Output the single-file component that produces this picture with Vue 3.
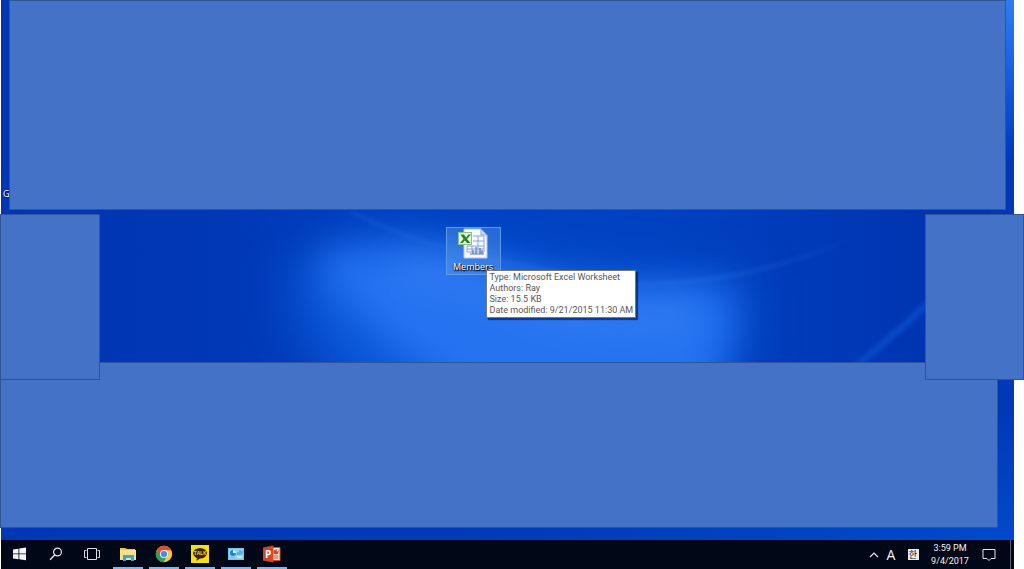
<script setup>
const details = [
  'Type: Microsoft Excel Worksheet',
  'Authors: Ray',
  'Size: 15.5 KB',
  'Date modified: 9/21/2015 11:30 AM',
]
</script>

<template>
  <div class="screen">
    <main class="desktop">
      <svg class="wallpaper" viewBox="0 0 1013 540" preserveAspectRatio="none" aria-hidden="true">
        <defs>
          <linearGradient id="edge" x1="0" y1="0" x2="0" y2="1">
            <stop offset="0" stop-color="#2f7cf0" />
            <stop offset="0.12" stop-color="#1a62e0" />
            <stop offset="0.3" stop-color="#0038b6" />
            <stop offset="0.75" stop-color="#0038b6" />
            <stop offset="1" stop-color="#004acb" />
          </linearGradient>
          <linearGradient id="base" x1="0" y1="0" x2="1" y2="0">
            <stop offset="0" stop-color="#0036b3" />
            <stop offset="0.2" stop-color="#0037b5" />
            <stop offset="0.4" stop-color="#0042c1" />
            <stop offset="0.65" stop-color="#0042c1" />
            <stop offset="0.9" stop-color="#0035b2" />
          </linearGradient>
          <linearGradient id="floor" x1="0" y1="0" x2="1" y2="0">
            <stop offset="0" stop-color="#0037b4" />
            <stop offset="0.5" stop-color="#003bb9" />
            <stop offset="1" stop-color="#004acb" />
          </linearGradient>
          <linearGradient id="arc" gradientUnits="userSpaceOnUse" x1="350" y1="0" x2="860" y2="0">
            <stop offset="0" stop-color="#2470e4" stop-opacity="0.4" />
            <stop offset="0.7" stop-color="#2470e4" stop-opacity="0.6" />
            <stop offset="1" stop-color="#2470e4" stop-opacity="0" />
          </linearGradient>
          <filter id="soft" x="-30%" y="-50%" width="160%" height="200%" color-interpolation-filters="sRGB"><feGaussianBlur stdDeviation="24" /></filter>
          <filter id="mid" x="-30%" y="-80%" width="160%" height="260%" color-interpolation-filters="sRGB"><feGaussianBlur stdDeviation="18" /></filter>
          <filter id="fine" x="-10%" y="-50%" width="120%" height="200%" color-interpolation-filters="sRGB"><feGaussianBlur stdDeviation="2" /></filter>
        </defs>
        <rect width="1013" height="540" fill="url(#base)" />
        <rect y="500" width="1013" height="40" fill="url(#floor)" />
        <rect x="990" width="23" height="540" fill="url(#edge)" />
        <path d="M290 270C330 235 420 230 500 250S690 285 745 275V350L700 420H380Q290 350 290 270Z" fill="#0b58d7" filter="url(#soft)" />
        <path d="M315 262C360 240 430 246 500 272S670 288 725 290Q735 330 705 400H480Q370 350 315 262Z" fill="#2673f0" filter="url(#mid)" />
        <path d="M400 266Q470 272 530 300T690 310" fill="none" stroke="#3b82f5" stroke-width="24" opacity="0.7" filter="url(#mid)" />
        <path d="M350 212Q400 236 450 250T630 284Q740 286 850 239" fill="none" stroke="url(#arc)" stroke-width="3" filter="url(#fine)" />
        <path d="M855 366Q900 330 945 286" fill="none" stroke="#0c5ad6" stroke-width="7" opacity="0.55" filter="url(#fine)" />
      </svg>

      <div class="far-icon">G</div>
      <section class="cover top"></section>
      <section class="cover bottom"></section>
      <section class="cover left"></section>
      <section class="cover right"></section>

      <button class="file" type="button" aria-describedby="file-tip">
        <svg width="32" height="32" viewBox="0 0 32 32" aria-hidden="true">
          <path d="M7 1H24L30 7V30H7Z" fill="#f4f8ff" stroke="#b9c8e4" />
          <path d="M24 1V7H30Z" fill="#cfdcf3" stroke="#8ba8da" />
          <path d="M16 8H27V24H10V18M10 18H27M16 13H27M21 8V24M10 21H27M15 18V24" fill="none" stroke="#8ba6d8" />
          <path d="M16 26V22M19 26V19M23 26V20M25 26V22M13 26H27" fill="none" stroke="#5577bd" stroke-width="1.2" />
          <rect x="1.5" y="4.5" width="13" height="12" fill="#e6f3df" stroke="#8abf7c" />
          <path d="M3.5 6.500H7L9 9.500 11.500 6.500H14L10 11 13.500 15H10L8 12.500 5.500 15H3L6.500 11Z" fill="#258334" />
        </svg>
        <span>Members</span>
      </button>

      <div id="file-tip" class="tip" role="tooltip">
        <div v-for="line in details" :key="line">{{ line }}</div>
      </div>
    </main>

    <footer class="taskbar">
      <nav class="apps" aria-label="Taskbar">
        <button type="button" aria-label="Start">
          <svg width="14" height="14" viewBox="0 0 14 14"><path d="M0 2.500 5.500 1.700V6.500H0ZM6.300 1.600 13 .6V6.500H6.300ZM0 7.300H5.500V12.200L0 11.400ZM6.300 7.300H13V13.200L6.300 12.300Z" fill="#f4f5f8" /></svg>
        </button>
        <button type="button" aria-label="Search">
          <svg width="14" height="14" viewBox="0 0 14 14" fill="none" stroke="#e6e8ee"><circle cx="8.500" cy="5" r="3.900" stroke-width="1.200" /><path d="M5.700 8 1 12.800" stroke-width="1.400" /></svg>
        </button>
        <button type="button" aria-label="Task view">
          <svg width="16" height="14" viewBox="0 0 16 14" fill="none" stroke="#dadde4"><path d="M3.500 1.500H12.500V12.500H3.500ZM2.500 3.500H.5V10.500H2.500M13.500 3.500H15.500V10.500H13.500" /></svg>
        </button>
        <button class="open" type="button" aria-label="File Explorer">
          <svg width="18" height="16" viewBox="0 0 18 16"><path d="M1 2H6L8 3H16V14H1Z" fill="#f0c34e" /><path d="M1 4H17V14H1Z" fill="#fbe08a" /><path d="M4 15V9H15V15H12V12H7V15Z" fill="#2fa8e6" /></svg>
        </button>
        <button class="open" type="button" aria-label="Chrome">
          <svg width="18" height="18" viewBox="0 0 18 18"><circle cx="9" cy="9" r="8.200" fill="#fbc935" /><path d="M1.900 4.900A8.200 8.200 0 0 0 8.500 17.200L12.200 11 9 9 5.800 11Z" fill="#2f9e57" /><path d="M1.900 4.900 5.500 11 9 5.200H16.200A8.200 8.200 0 0 0 1.900 4.900Z" fill="#dd4b3e" /><circle cx="9" cy="9" r="4" fill="#f3f5f8" /><circle cx="9" cy="9" r="3.100" fill="#4a87e8" /></svg>
        </button>
        <button class="open" type="button" aria-label="KakaoTalk">
          <svg width="18" height="18" viewBox="0 0 18 18"><path d="M0 0H18V18H0Z" fill="#fae100" /><ellipse cx="9" cy="8.300" rx="7" ry="5.300" fill="#3b2320" /><path d="M6 12 5.500 16 9.500 13Z" fill="#3b2320" /><text x="9" y="10.200" text-anchor="middle" font-size="5" font-weight="700" fill="#f4da00">TALK</text></svg>
        </button>
        <button class="open" type="button" aria-label="Control Panel">
          <svg width="16" height="12" viewBox="0 0 16 12"><path d="M0 0H16V12H0Z" fill="#6cc4ef" /><path d="M1 1H15V11H1Z" fill="#8dd3f5" /><circle cx="5" cy="5" r="3" fill="#2080c8" /><path d="M5 5V2A3 3 0 0 1 8 5Z" fill="#f6f8fa" /><path d="M10 7V4M12 7V2M14 6V3" stroke="#2e8bc7" /><path d="M3 9.500H7" stroke="#ee9f42" /><path d="M9 9H14" stroke="#fff" /></svg>
        </button>
        <button class="open" type="button" aria-label="PowerPoint">
          <svg width="18" height="18" viewBox="0 0 18 18"><path d="M9 2.500H17V15.500H9Z" fill="#fbeeea" stroke="#d24726" /><path d="M11 11H15.500M11 13H15.500" stroke="#d24726" /><circle cx="13" cy="7" r="2.500" fill="#d24726" /><path d="M13.500 6.500V4A2.500 2.500 0 0 1 16 6.500Z" fill="#fff" stroke="#d24726" stroke-width=".5" /><path d="M0 2.500 10.500 .5V17.500L0 15.500Z" fill="#d24726" /><text x="5.200" y="12.800" text-anchor="middle" font-size="10" font-weight="700" fill="#fff">P</text></svg>
        </button>
      </nav>

      <div class="tray">
        <button type="button" aria-label="Show hidden icons">
          <svg width="10" height="8" viewBox="0 0 10 8"><path d="M1 6 5 2 9 6" fill="none" stroke="#e4e6ec" stroke-width="1.200" /></svg>
        </button>
        <button class="latin" type="button">A</button>
        <button class="hangul" type="button"><span>한</span></button>
        <button class="clock" type="button"><span>3:59 PM</span><span>9/4/2017</span></button>
        <button class="notes" type="button" aria-label="Notifications">
          <svg width="14" height="14" viewBox="0 0 14 14"><path d="M1 1.500H13V10.500H9L7 12.500 5 10.500H1Z" fill="none" stroke="#e4e6ec" /></svg>
        </button>
        <button class="peek" type="button" aria-label="Show desktop"></button>
      </div>
    </footer>
  </div>
</template>

<style>
body {
  background: #fff;
}
</style>

<style scoped>
.screen {
  display: grid;
  grid-template-rows: 1fr 29px;
  height: 100vh;
  padding-right: 10px;
  box-sizing: border-box;
  overflow: hidden;
  font-family: "Open Sans", "Noto Sans", "Noto Sans CJK KR", sans-serif;
}
.desktop {
  position: relative;
  margin-left: 1px;
}
.wallpaper {
  position: absolute;
  inset: 0;
  width: 100%;
  height: 100%;
}
.cover {
  position: absolute;
  box-sizing: border-box;
  background: #4472c7;
  border: 1px solid #2f5597;
}
.top { left: 8px; right: 8px; top: 0; height: 210px; }
.bottom { left: -1px; right: 16px; top: 362px; bottom: 12px; }
.left { left: -1px; width: 100px; top: 214px; height: 166px; }
.right { right: -10px; width: 99px; top: 214px; height: 166px; }
.far-icon {
  position: absolute;
  left: 2px;
  top: 188px;
  color: #fff;
  font-size: 9px;
  line-height: 12px;
  text-shadow: 1px 1px 1px #000;
}
button {
  border: 0;
  padding: 0;
  background: none;
  color: #f2f3f6;
  font-family: inherit;
}
.file {
  position: absolute;
  left: calc(50% - 62px);
  top: 227px;
  width: 55px;
  height: 48px;
  display: flex;
  flex-direction: column;
  align-items: center;
  justify-content: flex-end;
  border: 1px solid #5b9bea;
  background: rgba(110, 170, 240, 0.35);
}
.file span {
  color: #fff;
  font-size: 9px;
  line-height: 14px;
  text-shadow: 1px 1px 1px #000, 0 1px 2px #000;
}
.tip {
  position: absolute;
  left: calc(50% - 22px);
  top: 270px;
  padding: 1px 2px 1px 3px;
  border: 1px solid #767676;
  background: #fff;
  box-shadow: 2px 2px 1px rgba(0, 20, 60, 0.6);
  color: #575757;
  font-family: Roboto, sans-serif;
  font-size: 9px;
  line-height: 11px;
  white-space: nowrap;
}
.taskbar {
  display: flex;
  justify-content: space-between;
  margin-left: 1px;
  background: #000818;
}
.apps,
.tray {
  display: flex;
}
.apps button {
  width: 30px;
  margin-right: 6px;
  display: grid;
  place-items: center;
  border-bottom: 2px solid transparent;
}
.apps {
  padding-left: 4px;
}
.apps .open {
  border-bottom-color: #76b9ed;
}
.tray button {
  display: grid;
  place-items: center;
}
.tray button:first-child {
  width: 14px;
}
.tray .latin {
  width: 20px;
  font-size: 14px;
}
.tray .hangul {
  width: 24px;
}
.hangul span {
  background: #e9eaee;
  color: #000818;
  font-size: 9px;
  line-height: 11px;
  width: 11px;
  height: 11px;
}
.tray .clock {
  width: 50px;
  align-content: center;
  font-family: Roboto, sans-serif;
  font-size: 9px;
  line-height: 13px;
}
.tray .notes {
  width: 28px;
}
.tray .peek {
  width: 4px;
  margin-left: 7px;
  border-left: 1px solid #5c6270;
}
</style>
